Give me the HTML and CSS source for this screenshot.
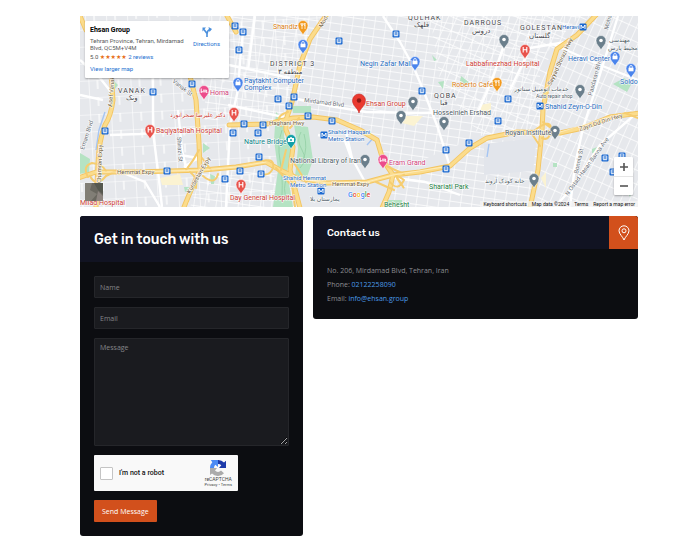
FILE: index.html
```html
<!DOCTYPE html>
<html lang="en">
<head>
<meta charset="utf-8">
<title>Contact - Ehsan Group</title>
<meta name="viewport" content="width=device-width, initial-scale=1">
<link rel="stylesheet" href="styles.css">
</head>
<body>
<main class="page">
  <section class="map" aria-label="Map">
    <svg class="map-canvas" viewBox="80 16 558 191" preserveAspectRatio="xMidYMid slice">
      <defs>
        <pattern id="gridA" width="11" height="8" patternUnits="userSpaceOnUse" patternTransform="rotate(8)">
          <path d="M0 0H11M0 0V8" stroke="#fff" stroke-width="1.3" fill="none"/>
        </pattern>
        <pattern id="gridB" width="8" height="13" patternUnits="userSpaceOnUse" patternTransform="rotate(24)">
          <path d="M0 0H8M0 0V13" stroke="#fff" stroke-width="1.3" fill="none"/>
        </pattern>
        <pattern id="gridC" width="21" height="17" patternUnits="userSpaceOnUse" patternTransform="rotate(-3)">
          <path d="M0 0H21M0 0V17M9 0V9" stroke="#fff" stroke-width="1.2" fill="none"/>
        </pattern>
        <path id="pin" d="M0 9C-1 6-5 4-5-.5A5 5 0 0 1 5-.5C5 4 1 6 0 9Z" stroke="#fff" stroke-width=".5"/>
        <g id="bus">
          <rect x="-3.5" y="-3.5" width="7" height="7" rx="1.2" fill="#1a68d0"/>
          <path d="M-1.8-2H1.8V1.5H-1.8ZM-1.8 0H1.8M-1 1.6V2.5M1 1.6V2.5" fill="none" stroke="#fff" stroke-width=".8"/>
        </g>
        <g id="metro">
          <rect x="-3.5" y="-3.5" width="7" height="7" rx="1" fill="#1a68d0"/>
          <path d="M-2 2V-2L0 1L2-2V2" fill="none" stroke="#fff" stroke-width="1"/>
        </g>
        <g id="hospital">
          <use href="#pin" fill="#e8534c"/>
          <path d="M-1.8-3V2.4M1.8-3V2.4M-1.8-.3H1.8" stroke="#fff" stroke-width="1.1"/>
        </g>
        <g id="place">
          <use href="#pin" fill="#6b7f8c"/>
          <circle cy="-.5" r="1.8" fill="#fff"/>
        </g>
        <g id="shop">
          <use href="#pin" fill="#4a84ec"/>
          <path d="M-2.5-1.3H2.5V2.3H-2.5Z" fill="#fff"/>
          <path d="M-1.3-1V-2.2A1.3 1.3 0 0 1 1.3-2.2V-1" fill="none" stroke="#fff" stroke-width=".8"/>
        </g>
        <g id="food">
          <use href="#pin" fill="#f29a1f"/>
          <path d="M-2-3V-1Q-1 0 0-1V-3M-1-3V3M2-3V3M2-3Q.5-1 2 0" fill="none" stroke="#fff" stroke-width=".8"/>
        </g>
        <g id="hotel">
          <use href="#pin" fill="#ec4c8b"/>
          <path d="M-2.8-2.5V2M-2.8.8H2.8V2M-1-.8H2.6V.5" fill="none" stroke="#fff" stroke-width="1"/>
        </g>
      </defs>

      <rect x="80" y="16" width="558" height="191" fill="#e6e8ec"/>
      <path d="M300 65L327 16H580L540 60V130L480 136L393 172L377 140L313 114L292 102Z" fill="url(#gridA)"/>
      <path d="M430 16H590L548 60L543 130L480 136L440 80Z" fill="url(#gridB)"/>
      <path d="M595 16H638V112L545 130L550 72Z" fill="url(#gridB)"/>
      <path d="M80 16H325L290 110L286 170L300 207H80Z" fill="url(#gridC)"/>
      <path d="M205 16H320L290 120H205ZM203 172L270 168L290 207H190Z" fill="url(#gridA)"/>
      <path d="M395 178L450 168L480 140H540L533 207H385Z" fill="url(#gridA)"/>
      <path d="M546 135L638 116V207H536Z" fill="url(#gridB)"/>
      <path d="M318 124L365 137L380 165L365 180H298L294 140Z" fill="#e6e8ec"/>
      <path d="M484 144L537 138L533 171L484 175Z" fill="#e2e5eb"/>

      <g fill="#b5e3c3">
        <path d="M276 112L285 121L284 137L292 150L287 171L293 207H273L278 170L274 140Z"/>
        <path d="M294 125L308 127L313 160L307 177H295L298 148Z"/>
        <path d="M292 106H311V113H293ZM80 153L90 159L89 172L80 174ZM203 143L210 148L203 153ZM461 76L470 83L467 86L460 81ZM613 84L624 78L632 83L627 92ZM592 149L600 146L598 153H592ZM438 82L444 81L443 89ZM111 78L118 85L113 91ZM184 187H194L192 192H185ZM383 200H402V207H383ZM624 186L632 190L630 197ZM210 174L215 176L214 184H211ZM553 163H557V167H553ZM432 55L437 60L434 61Z"/>
      </g>
      <g fill="#fbf3d2">
        <path d="M160 178L180 174L183 185L162 185ZM402 116L423 116L414 126L402 123ZM480 105L491 103V115L481 114ZM541 178L546 172V188Z"/>
      </g>
      <g fill="none" stroke="#93cfa4" stroke-width=".8">
        <path d="M282 130Q277 145 280 160T282 195M301 132Q296 140 302 150T300 168M287 178Q282 188 287 200M304 134Q308 148 303 160"/>
      </g>
      <path d="M105 112L99 130L96 150M374 137L367 145M489 144L487 157" fill="none" stroke="#a5c5f3" stroke-width="1.4"/>

      <g fill="none" stroke="#fff" stroke-width="2.4" stroke-linejoin="round">
        <path d="M383 16L400 42L414 68L424 92L438 128L450 167"/>
        <path d="M292 98L330 106L366 112L420 113L470 112"/>
        <path d="M243 32L240 62L238 90L230 125L226 207"/>
        <path d="M110 135L140 134L196 129M153 60V132L158 171L162 207M178 110L182 150L186 168"/>
        <path d="M205 60L290 78M255 16L248 70M228 105L288 118"/>
        <path d="M550 43L600 65L638 80M618 16L606 55L592 100L583 128L575 165L570 207"/>
        <path d="M638 112L600 145L570 190L555 207M504 45L492 80L478 112M566 42L530 48L510 90"/>
        <path d="M346 132L352 158L365 182M318 135L345 141L352 160M394 178L425 182L460 195"/>
        <path d="M80 60L100 78L111 92M80 95L103 100M121 172L145 182L160 207M180 155L198 158L184 167"/>
      </g>

      <g fill="none" stroke-linejoin="round" stroke-linecap="round">
        <g stroke="#f3c562" stroke-width="5">
          <path d="M110 60L113 100Q111 116 105 125Q99 140 98 163L96 207M80 16L86 30"/>
          <path d="M186 60L196 100L199 143L200 170L191 190L184 207M226 14L236 32"/>
          <path d="M78 178L96 172L136 172L203 170L236 167L266 162L280 170L297 178L327 183L367 182L393 175L420 172L450 166L470 148L487 138L517 132L560 133L583 128L610 117L640 113"/>
          <path d="M327 14L310 39L300 65L292 102L286 120L286 130L293 147L290 170L300 208"/>
          <path d="M229 125L267 124L293 118L313 117L337 120L360 130L377 140L383 160L393 175L389 192L382 208"/>
          <path d="M597 14L577 35L557 49L550 72L543 109L542 130L538 170L530 208"/>
        </g>
        <g stroke="#fbdc8c" stroke-width="3.2">
          <path d="M110 60L113 100Q111 116 105 125Q99 140 98 163L96 207M80 16L86 30"/>
          <path d="M186 60L196 100L199 143L200 170L191 190L184 207M226 14L236 32"/>
          <path d="M78 178L96 172L136 172L203 170L236 167L266 162L280 170L297 178L327 183L367 182L393 175L420 172L450 166L470 148L487 138L517 132L560 133L583 128L610 117L640 113"/>
          <path d="M327 14L310 39L300 65L292 102L286 120L286 130L293 147L290 170L300 208"/>
          <path d="M229 125L267 124L293 118L313 117L337 120L360 130L377 140L383 160L393 175L389 192L382 208"/>
          <path d="M597 14L577 35L557 49L550 72L543 109L542 130L538 170L530 208"/>
        </g>
        <g stroke="#f6cd70" stroke-width="2">
          <path d="M88 177Q82 166 92 163Q102 164 106 171M90 176Q96 188 106 176L116 171M186 170Q194 160 199 150M190 172Q198 178 196 188M203 176Q215 186 218 174M211 170L202 158"/>
          <path d="M264 161Q275 158 273 168Q270 176 262 174M276 168L292 186L295 207M286 150L281 170M291 158L306 182M281 126Q274 116 288 112M299 118L290 128"/>
          <path d="M396 176Q408 194 401 184Q390 170 404 180Q398 192 390 182M384 165L404 174M394 190L376 182M534 131Q550 118 551 128Q550 142 542 138M532 134L540 146M543 122L556 132M625 113L638 118"/>
        </g>
        <g stroke="#fff6dc" stroke-width=".6">
          <path d="M96 172H136L203 170L236 167L266 162M297 178L327 183L367 182L393 175L450 166M517 132H560L610 117"/>
        </g>
      </g>

      <g class="road-label">
        <text x="117" y="174">Hemmat Expy</text>
        <text x="332" y="186">Hemmat Expy</text>
        <text x="269" y="125">Haghani Hwy</text>
        <text transform="translate(580 131) rotate(-18)">Zayn Od Din Hwy</text>
        <text transform="translate(551 86) rotate(-65)">Sayyad Shirazi Hwy</text>
        <text transform="translate(190 194) rotate(-60)">Kurdestan Expy</text>
        <text transform="translate(101 183) rotate(-88)">Chamran Expy</text>
        <text transform="translate(112 107) rotate(-85)">Asef Vanak</text>
        <text transform="translate(322 28) rotate(-60)">Mod</text>
        <text class="street" transform="translate(304 102) rotate(7)">Mirdamad Blvd</text>
        <text class="street" transform="translate(84 150) rotate(-72)">Emam Blvd</text>
        <text class="street" transform="translate(177 137) rotate(86)">Shirazi St</text>
        <text class="street" transform="translate(172 82) rotate(38)">Vanak St</text>
        <text class="street" transform="translate(592 96) rotate(-75)">Pasdaran Blvd</text>
        <text class="street" transform="translate(608 30) rotate(-75)">Mohseni</text>
        <text class="street" transform="translate(578 174) rotate(-78)">Bonnia St</text>
        <text class="street" transform="translate(568 196) rotate(-54)">N Ostad Hasan Banna Ave</text>
      </g>

      <g>
        <use href="#bus" x="235" y="26"/><use href="#bus" x="243" y="32"/><use href="#bus" x="239" y="50"/>
        <use href="#bus" x="192" y="84"/><use href="#bus" x="153" y="92"/><use href="#bus" x="339" y="41"/>
        <use href="#bus" x="396" y="34"/><use href="#bus" x="422" y="91"/><use href="#bus" x="278" y="99"/>
        <use href="#bus" x="294" y="97"/><use href="#bus" x="289" y="106"/><use href="#bus" x="508" y="99"/>
        <use href="#bus" x="105" y="131"/><use href="#bus" x="167" y="171"/><use href="#bus" x="244" y="124"/>
        <use href="#bus" x="263" y="125"/><use href="#bus" x="233" y="133"/><use href="#bus" x="258" y="133"/>
        <use href="#bus" x="259" y="157"/><use href="#bus" x="240" y="171"/><use href="#bus" x="225" y="179"/>
        <use href="#bus" x="261" y="174"/><use href="#bus" x="308" y="116"/><use href="#bus" x="332" y="121"/>
        <use href="#bus" x="446" y="150"/><use href="#bus" x="446" y="169"/><use href="#bus" x="498" y="121"/>
        <use href="#bus" x="469" y="143"/><use href="#bus" x="605" y="158"/><use href="#bus" x="622" y="156"/>
        <use href="#bus" x="613" y="172"/>
        <use href="#metro" x="583" y="27"/><use href="#metro" x="540" y="106"/>
        <use href="#metro" x="324" y="135"/><use href="#metro" x="321" y="191"/>
        <use href="#food" x="303" y="26"/><use href="#food" x="497" y="83"/>
        <use href="#shop" x="303" y="45"/><use href="#shop" x="415" y="62"/><use href="#shop" x="615" y="57"/>
        <use href="#shop" x="631" y="69"/><use href="#shop" x="238" y="83"/>
        <use href="#hospital" x="525" y="50"/><use href="#hospital" x="150" y="130"/>
        <use href="#hospital" x="234" y="113"/><use href="#hospital" x="241" y="185"/>
        <use href="#place" x="504" y="40"/><use href="#place" x="601" y="41"/><use href="#place" x="580" y="90"/>
        <use href="#place" x="413" y="102"/><use href="#place" x="401" y="116"/><use href="#place" x="444" y="122"/>
        <use href="#place" x="555" y="131"/><use href="#place" x="534" y="179"/><use href="#place" x="365" y="160"/>
        <use href="#hotel" x="204" y="91"/><use href="#hotel" x="383" y="160"/>
        <use href="#pin" x="291" y="140" fill="#12a0a8"/>
        <path d="M288 138H290L290.500 137H291.500L292 138H294V142H288Z" fill="#fff"/>
        <circle cx="291" cy="140" r="1" fill="#12a0a8"/>
        <path d="M359 113C358 108 352.500 106 352.500 100.500A6.500 6.500 0 0 1 365.500 100.500C365.500 106 360 108 359 113Z" fill="#ea3a30" stroke="#c5221f" stroke-width=".6"/>
        <circle cx="359" cy="100.500" r="2.200" fill="#8e1a15"/>
      </g>

      <g class="poi">
        <text class="orange" x="273" y="29">Shandiz</text>
        <text class="orange" x="452" y="87">Roberto Café</text>
        <text class="blue" x="360" y="66">Negin Zafar Mall</text>
        <text class="blue small" x="562" y="29">Heravi</text>
        <text class="blue" x="568" y="61">Heravi Center</text>
        <text class="blue" x="620" y="84">Soldo</text>
        <text class="blue" x="244" y="83">Paytakht Computer</text>
        <text class="blue" x="244" y="90">Complex</text>
        <text class="blue" x="545" y="109">Shahid Zeyn-O-Din</text>
        <text class="blue small" x="328" y="134">Shahid Haqqani</text>
        <text class="blue small" x="328" y="141">Metro Station</text>
        <text class="blue small" x="283" y="180">Shahid Hemmat</text>
        <text class="blue small" x="290" y="187">Metro Station</text>
        <text class="pink" x="210" y="95">Homa</text>
        <text class="pink" x="389" y="165">Eram Grand</text>
        <text class="red" x="366" y="106">Ehsan Group</text>
        <text class="red" x="466" y="66">Labbafinezhad Hospital</text>
        <text class="red" x="156" y="133">Baqiyatallah Hospital</text>
        <text class="red" x="230" y="200">Day General Hospital</text>
        <text class="red" x="80" y="205">Milad Hospital</text>
        <text class="red small" x="170" y="117">دکتر علیرضا صحرانورد</text>
        <text class="teal" x="244" y="144">Nature Bridge</text>
        <text class="green" x="384" y="207">Behesht</text>
        <text class="green" x="429" y="189">Shariati Park</text>
        <text class="grey" x="290" y="163">National Library of Iran</text>
        <text class="grey" x="505" y="135">Royan Institute</text>
        <text class="grey" x="433" y="115">Hosseinieh Ershad</text>
        <text class="grey small" x="485" y="183">خانه کودک آروند</text>
        <text class="grey small" x="514" y="91">خدمات اتومبیل سناتور</text>
        <text class="grey tiny" x="536" y="98">Auto repair shop</text>
        <text class="grey small" x="609" y="42">مهندسی</text>
        <text class="grey small" x="608" y="50">محیط پارس</text>
        <text class="grey small" x="310" y="201">یمارستان بلا</text>
      </g>
      <g class="district">
        <text x="270" y="66">DISTRICT 3</text>
        <text x="278" y="74">منطقه ۳</text>
        <text x="118" y="93">VANAK</text>
        <text x="126" y="100">ونک</text>
        <text x="408" y="20">QOLHAK</text>
        <text x="414" y="27">قلهک</text>
        <text x="464" y="25">DARROUS</text>
        <text x="472" y="33">دروس</text>
        <text x="520" y="30">GOLESTAN</text>
        <text x="529" y="38">گلستان</text>
        <text x="434" y="98">QOBA</text>
        <text x="440" y="105">قبا</text>
      </g>
      <text class="google" x="348" y="197"><tspan fill="#4285f4">G</tspan><tspan fill="#ea4335">o</tspan><tspan fill="#fbbc05">o</tspan><tspan fill="#4285f4">g</tspan><tspan fill="#34a853">l</tspan><tspan fill="#ea4335">e</tspan></text>
      <g>
        <rect x="85" y="183" width="18" height="18" rx="1" fill="#69675f"/>
        <path d="M85 183H92L90 190L97 194L91 201H85Z" fill="#817e76"/>
        <path d="M94 183H103V194L98 190Z" fill="#56584f"/>
        <path d="M96 201L98 191L103 196V201Z" fill="#8d8580"/>
      </g>
    </svg>

    <div class="place-card">
      <div class="place-info">
        <h2 class="place-name">Ehsan Group</h2>
        <p class="place-address">Tehran Province, Tehran, Mirdamad Blvd, QC5M+V4M</p>
        <p class="place-rating">5.0 <span class="stars">★★★★★</span> <a href="#reviews">2 reviews</a></p>
        <a class="larger" href="#map">View larger map</a>
      </div>
      <a class="directions" href="#directions">
        <svg width="12" height="12" viewBox="0 0 12 12" aria-hidden="true">
          <path d="M6 11V7.500L3 3.500M6 8Q6 4.500 9 3.500" fill="none" stroke="#4a8fdc" stroke-width="1.600"/>
          <path d="M1.500 5.500V1.500H5ZM7.500 1L11 3L8.500 6Z" fill="#4a8fdc"/>
        </svg>
        <span>Directions</span>
      </a>
    </div>

    <div class="zoom">
      <button type="button" aria-label="Zoom in"><svg width="10" height="10" viewBox="0 0 10 10"><path d="M5 1V9M1 5H9" stroke="#555" stroke-width="1.600"/></svg></button>
      <button type="button" aria-label="Zoom out"><svg width="10" height="10" viewBox="0 0 10 10"><path d="M1 5H9" stroke="#555" stroke-width="1.600"/></svg></button>
    </div>
    <div class="attribution">
      <span>Keyboard shortcuts</span><span>Map data ©2024</span><span>Terms</span><span>Report a map error</span>
    </div>
  </section>

  <div class="columns">
    <section class="card">
      <header class="card-head form-head"><h1>Get in touch with us</h1></header>
      <form class="form">
        <input class="field" type="text" placeholder="Name" aria-label="Name">
        <input class="field" type="email" placeholder="Email" aria-label="Email">
        <textarea class="field message" placeholder="Message" aria-label="Message"></textarea>
        <div class="captcha">
          <input id="robot" type="checkbox">
          <label for="robot">I'm not a robot</label>
          <div class="captcha-brand">
            <svg width="16" height="16" viewBox="0 0 16 16" aria-hidden="true">
              <path d="M8 0A8 8 0 0 1 14 2.500L16 .8V8H9L11.300 5.200A4.500 4.500 0 0 0 8 4Z" fill="#1c3aa9"/>
              <path d="M0 8A8 8 0 0 1 2.300 2.200L.8 0H8V7L5.300 4.800A4.500 4.500 0 0 0 4 8Z" fill="#4a8af4"/>
              <path d="M0 8H7L5 10.500A4 4 0 0 0 11 10.600L14 13.200A8 8 0 0 1 2 13.400L0 15Z" fill="#ababab"/>
            </svg>
            <span class="brand-name">reCAPTCHA</span>
            <span class="brand-links">Privacy • Terms</span>
          </div>
        </div>
        <button class="send" type="submit">Send Message</button>
      </form>
    </section>

    <section class="card">
      <header class="card-head contact-head">
        <h2>Contact us</h2>
        <span class="marker">
          <svg width="12" height="16" viewBox="0 0 12 16" aria-hidden="true">
            <path d="M6 15C5 12 1 9 1 5.800A5 5 0 0 1 11 5.800C11 9 7 12 6 15Z" fill="none" stroke="#fff"/>
            <circle cx="6" cy="5.800" r="2" fill="none" stroke="#fff"/>
          </svg>
        </span>
      </header>
      <address class="details">
        <p>No. 206, Mirdamad Blvd, Tehran, Iran</p>
        <p>Phone: <a href="tel:02122258090">02122258090</a></p>
        <p>Email: <a href="mailto:info@ehsan.group">info@ehsan.group</a></p>
      </address>
    </section>
  </div>
</main>
</body>
</html>
```
FILE: styles.css
```css
* {
  box-sizing: border-box;
}

body {
  margin: 0;
  background: #fff;
  font-family: "Open Sans", "DejaVu Sans", sans-serif;
  font-size: 7px;
}

h1, h2, p {
  margin: 0;
  font-weight: 400;
}

a {
  color: #4b9be8;
  text-decoration: none;
}

.page {
  padding: 16px 58px 22px 80px;
}

/* Map */
.map {
  position: relative;
  overflow: hidden;
  font-family: Roboto, "DejaVu Sans", sans-serif;
}

.map-canvas {
  display: block;
  width: 100%;
}

.road-label {
  font-size: 6px;
  fill: #6e5a35;
  stroke: #fff;
  stroke-width: 1px;
  paint-order: stroke;
}

.street {
  fill: #666c73;
}

.poi {
  font-size: 7px;
  stroke: #fff;
  stroke-width: 1px;
  paint-order: stroke;
}

.small {
  font-size: 6px;
}

.tiny {
  font-size: 5px;
}

.orange { fill: #d97c13; }
.blue { fill: #2669bd; }
.pink { fill: #cf3a78; }
.red { fill: #cb3a34; }
.teal { fill: #0b7f87; }
.green { fill: #1b7d43; }
.grey { fill: #4c5a64; }

.district {
  font-size: 7px;
  fill: #3f444a;
  stroke: #fff;
  stroke-width: 1px;
  paint-order: stroke;
  letter-spacing: 1px;
}

.google {
  font-size: 7px;
  font-weight: 500;
  stroke: #fff;
  stroke-width: 1px;
  paint-order: stroke;
}

.place-card {
  position: absolute;
  top: 5px;
  left: 5px;
  display: flex;
  justify-content: space-between;
  width: 144px;
  padding: 5px;
  border-radius: 1px;
  background: #fff;
  box-shadow: 0 1px 2px rgba(0, 0, 0, .3);
  font-size: 6px;
  line-height: 7px;
}

.place-card a {
  color: #1a6fd0;
}

.place-info {
  width: 96px;
}

.place-name {
  font-size: 7px;
  font-weight: 700;
  line-height: 9px;
}

.place-address {
  margin-top: 2px;
  color: #5b5b5b;
}

.place-rating {
  margin: 2px 0 4px;
  line-height: 8px;
  color: #555;
}

.stars {
  color: #e7711b;
}

.larger {
  display: block;
  line-height: 8px;
}

.directions {
  display: flex;
  flex-direction: column;
  align-items: center;
  gap: 2px;
  padding-right: 4px;
}

.zoom {
  position: absolute;
  right: 5px;
  bottom: 12px;
  display: flex;
  flex-direction: column;
  width: 19px;
  border-radius: 1px;
  background: #fff;
  box-shadow: 0 1px 2px rgba(0, 0, 0, .3);
}

.zoom button {
  display: flex;
  align-items: center;
  justify-content: center;
  height: 19px;
  padding: 0;
  border: 0;
  background: none;
}

.zoom button + button {
  border-top: 1px solid #e6e6e6;
}

.attribution {
  position: absolute;
  right: 0;
  bottom: 0;
  display: flex;
  gap: 5px;
  padding: 0 3px;
  background: rgba(245, 245, 245, .7);
  color: #111;
  font-size: 5px;
  line-height: 6px;
}

/* Cards */
.columns {
  display: grid;
  grid-template-columns: 223fr 325fr;
  align-items: start;
  gap: 10px;
  margin-top: 9px;
}

.card {
  overflow: hidden;
  border-radius: 3px;
  background: #0c0d11;
}

.card-head {
  display: flex;
  align-items: center;
  background: #111322;
  color: #fff;
  font-family: Rubik, Roboto, sans-serif;
}

.form-head {
  height: 46px;
  padding: 0 14px;
}

.form-head h1 {
  font-size: 14px;
  font-weight: 500;
}

.contact-head {
  justify-content: space-between;
  height: 33px;
  padding-left: 14px;
}

.contact-head h2 {
  font-size: 10px;
  font-weight: 500;
}

.marker {
  display: flex;
  align-items: center;
  justify-content: center;
  align-self: stretch;
  width: 29px;
  background: #d2501c;
}

.form {
  display: flex;
  flex-direction: column;
  align-items: flex-start;
  gap: 9px;
  padding: 14px;
}

.field {
  display: block;
  width: 100%;
  height: 22px;
  margin: 0;
  padding: 0 5px;
  border: 1px solid #25262a;
  border-radius: 1px;
  background: #1a1b1f;
  color: #ddd;
  font: inherit;
}

.field::placeholder {
  color: #85868a;
}

.message {
  height: 108px;
  padding: 4px 5px;
  resize: vertical;
}

.captcha {
  display: flex;
  align-items: center;
  width: 144px;
  height: 36px;
  padding: 0 6px;
  border-radius: 1px;
  background: #f9f9f9;
  color: #111;
}

.captcha input {
  appearance: none;
  width: 13px;
  height: 13px;
  margin: 0 6px 0 0;
  border: 1px solid #c4c4c4;
  border-radius: 1px;
  background: #fff;
}

.captcha label {
  font-family: Roboto, sans-serif;
  font-weight: 500;
}

.captcha-brand {
  display: flex;
  flex-direction: column;
  align-items: center;
  margin-left: auto;
  font-family: Roboto, sans-serif;
  color: #444;
}

.brand-name {
  font-size: 5px;
  line-height: 6px;
}

.brand-links {
  font-size: 4px;
  line-height: 5px;
}

.send {
  height: 22px;
  padding: 0 8px;
  border: 0;
  border-radius: 1px;
  background: #d2501c;
  color: #fff;
  font: inherit;
}

.details {
  padding: 15px 14px 13px;
  color: #8d8e92;
  font-style: normal;
  line-height: 14px;
}
```
